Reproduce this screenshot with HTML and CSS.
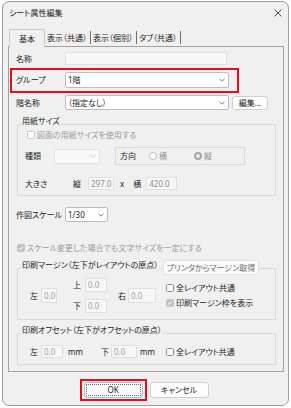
FILE: index.html
```html
<!DOCTYPE html>
<html lang="ja">
<head>
<meta charset="utf-8">
<title>シート属性編集</title>
<link rel="stylesheet" href="styles.css">
</head>
<body>
<div class="window">
  <div class="titlebar">
    <span class="title">シート属性編集</span>
    <svg class="close" width="8" height="8" viewBox="0 0 8 8"><path d="M0.5 0.5L7.5 7.5M7.5 0.5L0.5 7.5" stroke="#3a3a3a" stroke-width="0.9" fill="none"/></svg>
  </div>
  <div class="tabs">
    <div class="tab active">基本</div>
    <div class="tab">表示（共通）</div>
    <div class="tab">表示（個別）</div>
    <div class="tab">タブ（共通）</div>
  </div>
  <div class="panel">
    <div class="row r-name">
      <span class="lbl">名称</span>
      <span class="field w-name"></span>
    </div>
    <div class="row r-group">
      <span class="lbl">グループ</span>
      <span class="combo c-main"><span>1階</span><svg class="chev" width="6" height="4" viewBox="0 0 6 4"><path d="M0.5 0.8L3 3.2L5.5 0.8" stroke="#5a5a5a" fill="none" stroke-width="0.8"/></svg></span>
    </div>
    <div class="row r-floor">
      <span class="lbl">階名称</span>
      <span class="combo c-main c-short"><span>（指定なし）</span><svg class="chev" width="6" height="4" viewBox="0 0 6 4"><path d="M0.5 0.8L3 3.2L5.5 0.8" stroke="#5a5a5a" fill="none" stroke-width="0.8"/></svg></span>
      <span class="btn btn-edit">編集...</span>
    </div>

    <div class="group g-paper">
      <span class="gtitle">用紙サイズ</span>
      <div class="chk chk-paper dim"><span class="cb cb-dis"></span>図面の用紙サイズを使用する</div>
      <div class="row r-kind">
        <span class="lbl2 w-kindlbl">種類</span>
        <span class="combo c-kind"><span></span><svg class="chev" width="6" height="4" viewBox="0 0 6 4"><path d="M0.5 0.8L3 3.2L5.5 0.8" stroke="#c4c4c4" fill="none" stroke-width="0.8"/></svg></span>
        <div class="dir-box">
          <span>方向</span>
          <span class="radio r-yoko"></span><span class="dim2 t-yoko">横</span>
          <span class="radio on r-tate"></span><span class="dim2 t-tate">縦</span>
        </div>
      </div>
      <div class="row r-size">
        <span class="lbl2 w-sizelbl">大きさ</span>
        <span>縦</span>
        <span class="field f-h">297.0</span>
        <span class="x-sign">x</span>
        <span class="t-yoko2">横</span>
        <span class="field f-w">420.0</span>
      </div>
    </div>

    <div class="row r-scale">
      <span class="lbl">作図スケール</span>
      <span class="combo c-scale"><span>1/30</span><svg class="chev" width="6" height="4" viewBox="0 0 6 4"><path d="M0.5 0.8L3 3.2L5.5 0.8" stroke="#5a5a5a" fill="none" stroke-width="0.8"/></svg></span>
    </div>

    <div class="chk chk-scale dim"><span class="cb cb-on"><svg width="6" height="6" viewBox="0 0 6 6"><path d="M1 3.1L2.4 4.5L5 1.5" stroke="#fff" fill="none" stroke-width="1"/></svg></span>スケール変更した場合でも文字サイズを一定にする</div>

    <div class="group g-margin">
      <span class="gtitle">印刷マージン（左下がレイアウトの原点）</span>
      <span class="btn btn-printer">プリンタからマージン取得</span>
      <div class="m-left">
        <span>左</span><span class="field f-ml">0.0</span>
      </div>
      <div class="m-mid">
        <div class="m-row"><span>上</span><span class="field f-mt">0.0</span></div>
        <div class="m-row"><span>下</span><span class="field f-mt">0.0</span></div>
      </div>
      <div class="m-right">
        <span>右</span><span class="field f-mr">0.0</span>
      </div>
      <div class="m-checks">
        <div class="chk"><span class="cb"></span>全レイアウト共通</div>
        <div class="chk"><span class="cb cb-on"><svg width="6" height="6" viewBox="0 0 6 6"><path d="M1 3.1L2.4 4.5L5 1.5" stroke="#fff" fill="none" stroke-width="1"/></svg></span>印刷マージン枠を表示</div>
      </div>
    </div>

    <div class="group g-offset">
      <span class="gtitle">印刷オフセット（左下がオフセットの原点）</span>
      <span>左</span><span class="field f-ol">0.0</span><span class="mm mm1">mm</span>
      <span class="o-down">下</span><span class="field f-od">0.0</span><span class="mm mm2">mm</span>
      <div class="chk o-chk"><span class="cb"></span>全レイアウト共通</div>
    </div>
  </div>
  <div class="footer">
    <span class="btn btn-ok">OK</span>
    <span class="btn btn-cancel">キャンセル</span>
  </div>
</div>
</body>
</html>
```

FILE: styles.css
```css
html, body {
  margin: 0;
  background: #ffffff;
}
body {
  font-family: "Noto Sans", "Noto Sans CJK JP", sans-serif;
  font-size: 8px;
  line-height: 10px;
  color: #1b1b1b;
  font-feature-settings: "palt";
}
.window {
  margin: 1px 0 0 2px;
  width: 287px;
  height: 405px;
  box-sizing: border-box;
  border: 1px solid #9c9c9c;
  border-radius: 7px;
  background: #f0f0f0;
  padding: 0 4px 0 5px;
  display: flex;
  flex-direction: column;
}
.titlebar {
  height: 22px;
  display: flex;
  align-items: center;
  justify-content: space-between;
}
.title { margin-left: 1px; }
.close { margin-right: 2px; }

.tabs {
  display: flex;
  align-items: flex-end;
  height: 18px;
  margin-top: 5px;
  margin-bottom: -1px;
  padding-left: 1px;
  position: relative;
  z-index: 1;
}
.tab {
  height: 13px;
  margin-bottom: 3px;
  line-height: 13px;
  padding: 0 3px 0 2px;
  border-right: 1px solid #6f6f6f;
  white-space: nowrap;
}
.tab.active {
  box-sizing: border-box;
  height: 18px;
  margin-bottom: 0;
  line-height: 17px;
  width: 36px;
  text-align: center;
  padding: 0;
  border: 1px solid #c9c9c9;
  border-bottom: none;
  border-radius: 2px 2px 0 0;
  background: #f0f0f0;
}

.panel {
  border: 1px solid #a2a2a2;
  background: #f0f0f0;
  padding: 5px 7px 6px 7px;
}

.row {
  display: flex;
  align-items: center;
}
.lbl { width: 49px; flex: none; white-space: nowrap; }
.field {
  box-sizing: border-box;
  border: 1px solid #e0e0e0;
  background: #f7f7f7;
  color: #8e8e8e;
  padding-left: 2px;
  display: flex;
  align-items: center;
  flex: none;
}
.r-name { height: 13px; }
.w-name { width: 162px; height: 13px; }

.r-group {
  margin-top: 5px;
  margin-left: -4px;
  padding: 2px 8px 3px 4px;
  width: 225px;
  box-sizing: border-box;
  position: relative;
}
.r-group::after {
  content: "";
  position: absolute;
  inset: -2px;
  border: 2px solid #e50f1c;
}

.combo {
  box-sizing: border-box;
  height: 16px;
  border: 1px solid #bdbdbd;
  background: #ffffff;
  display: flex;
  align-items: center;
  justify-content: space-between;
  padding: 0 3px 0 2px;
  border-radius: 2px;
  flex: none;
}
.c-main { width: 164px; }
.c-short { height: 15px; }
.r-floor { margin-top: 4px; }

.btn {
  box-sizing: border-box;
  border: 1px solid #d0d0d0;
  background: #fdfdfd;
  border-radius: 3px;
  display: flex;
  align-items: center;
  justify-content: center;
  flex: none;
  white-space: nowrap;
}
.btn-edit { margin-left: 3px; width: 36px; height: 14px; }

.group {
  position: relative;
  margin-left: 1px;
  width: 259px;
  box-sizing: border-box;
  border: 1px solid #d9d9d9;
}
.gtitle {
  position: absolute;
  top: -9px;
  left: 3px;
  padding: 0 1px;
  background: #f0f0f0;
  white-space: nowrap;
}

.chk {
  display: flex;
  align-items: center;
  height: 10px;
  white-space: nowrap;
}
.cb {
  width: 8px;
  height: 8px;
  box-sizing: border-box;
  border: 1px solid #8c8c8c;
  background: #ffffff;
  border-radius: 1.5px;
  margin-right: 2px;
  flex: none;
  display: flex;
  align-items: center;
  justify-content: center;
}
.cb svg { display: block; }
.cb-dis { border-color: #c8c8c8; }
.cb-on { background: #c3c3c3; border-color: #c3c3c3; }
.dim { color: #9a9a9a; }
.dim2 { color: #8f8f8f; }

.g-paper {
  margin-top: 14px;
  padding: 5px 0 5px 7px;
}
.chk-paper { margin-left: 2px; }
.r-kind { margin-top: 7px; height: 18px; }
.lbl2 { flex: none; }
.w-kindlbl { width: 29px; }
.c-kind {
  width: 46px;
  height: 15px;
  background: #f9f9f9;
  border-color: #e2e2e2;
}
.dir-box {
  margin-left: 15px;
  width: 130px;
  height: 18px;
  box-sizing: border-box;
  border: 1px solid #dadada;
  display: flex;
  align-items: center;
  padding-left: 4px;
}
.radio {
  width: 8px;
  height: 8px;
  border-radius: 50%;
  box-sizing: border-box;
  border: 1px solid #bdbdbd;
  background: #ffffff;
  flex: none;
}
.radio.on {
  border: 2.5px solid #a6a6a6;
  background: #eeeeee;
}
.r-yoko { margin-left: 13px; }
.t-yoko { margin-left: 2px; }
.r-tate { margin-left: 27px; }
.t-tate { margin-left: 2px; }

.r-size { margin-top: 12px; height: 13px; }
.w-sizelbl { width: 48px; }
.f-h { margin-left: 7px; width: 26px; height: 13px; }
.x-sign { margin-left: 6px; }
.t-yoko2 { margin-left: 9px; }
.f-w { margin-left: 5px; width: 31px; height: 13px; }

.r-scale { margin-top: 11px; height: 15px; }
.c-scale { width: 43px; height: 15px; }

.chk-scale { margin-top: 21px; margin-left: 1px; }

.g-margin {
  margin-top: 15px;
  padding: 9px 0 6px 12px;
  display: flex;
  align-items: center;
}
.btn-printer {
  position: absolute;
  top: -9px;
  right: 16px;
  width: 96px;
  height: 15px;
  color: #6a6a6a;
  background: #fafafa;
  border-color: #e3e3e3;
}
.m-left, .m-right, .m-row {
  display: flex;
  align-items: center;
}
.f-ml { margin-left: 3px; width: 16px; height: 15px; color: #a2a2a2; }
.m-mid {
  margin-left: 16px;
  display: flex;
  flex-direction: column;
  gap: 7px;
}
.f-mt { margin-left: 4px; width: 22px; height: 14px; color: #a2a2a2; }
.m-right { margin-left: 11px; }
.f-mr { margin-left: 2px; width: 28px; height: 15px; color: #a2a2a2; }
.m-checks {
  margin-left: 10px;
  display: flex;
  flex-direction: column;
  gap: 5px;
}

.g-offset {
  margin-top: 13px;
  padding: 11px 0 6px 12px;
  display: flex;
  align-items: center;
  height: 32px;
}
.f-ol { margin-left: 3px; width: 22px; height: 13px; color: #a2a2a2; }
.mm1 { margin-left: 5px; }
.o-down { margin-left: 18px; }
.f-od { margin-left: 2px; width: 26px; height: 13px; color: #a2a2a2; }
.mm2 { margin-left: 3px; }
.o-chk { margin-left: 11px; }

.footer {
  display: flex;
  justify-content: center;
  gap: 7px;
  margin-top: 10px;
}
.btn-ok, .btn-cancel {
  width: 59px;
  height: 16px;
}
.btn-ok {
  position: relative;
  border-color: #aebbd0;
}
.btn-ok::before {
  content: "";
  position: absolute;
  inset: 1px;
  border: 1px dotted #6a6a6a;
}
.btn-ok::after {
  content: "";
  position: absolute;
  inset: -4px -5px;
  border: 2px solid #e50f1c;
}
```
